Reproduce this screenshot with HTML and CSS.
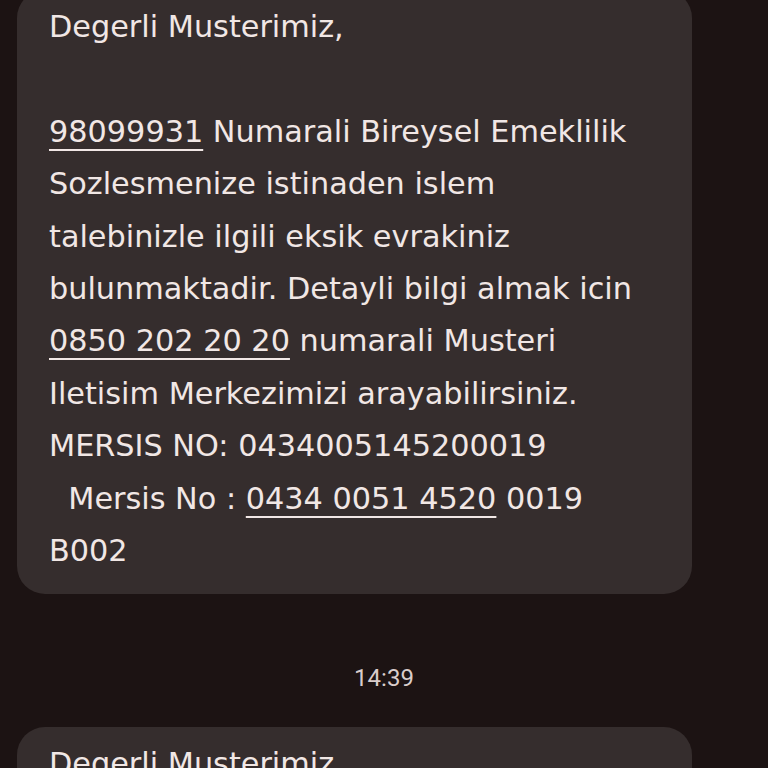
FILE: index.html
```html
<!DOCTYPE html>
<html>
<head>
<meta charset="utf-8">
<link rel="stylesheet" href="styles.css">
</head>
<body>
<div class="thread">
  <div class="bubble first">
    <p class="msg">Degerli Musterimiz,<br><br><span class="link">98099931</span> Numarali Bireysel Emeklilik<br>Sozlesmenize istinaden islem<br>talebinizle ilgili eksik evrakiniz<br>bulunmaktadir. Detayli bilgi almak icin<br><span class="link">0850 202 20 20</span> numarali Musteri<br>Iletisim Merkezimizi arayabilirsiniz.<br>MERSIS NO: 0434005145200019<br>&nbsp;&nbsp;Mersis No : <span class="link">0434 0051 4520</span> 0019<br>B002</p>
  </div>
  <div class="time">14:39</div>
  <div class="bubble second">
    <p class="msg">Degerli Musterimiz,</p>
  </div>
</div>
</body>
</html>
```

FILE: styles.css
```css
html, body {
  margin: 0;
  padding: 0;
  background: #1c1313;
  height: 100%;
  overflow: hidden;
}
.thread {
  padding-left: 17px;
  display: flex;
  flex-direction: column;
}
.bubble {
  width: 675px;
  box-sizing: border-box;
  background: #352d2d;
  border-radius: 28px;
  padding: 11px 32px 17px 32px;
}
.bubble.first {
  margin-top: -10px;
}
.msg {
  margin: 0;
  font-family: "DejaVu Sans", "Open Sans", sans-serif;
  font-size: 30.3px;
  line-height: 52.4px;
  color: #f1e7e5;
  white-space: nowrap;
}
.link {
  text-decoration: underline;
  text-decoration-thickness: 2px;
  text-underline-offset: 7px;
}
.time {
  font-family: Roboto, "Noto Sans", sans-serif;
  font-size: 24px;
  color: #d9cdcb;
  text-align: center;
  width: 734px;
  height: 133px;
  line-height: 26px;
  padding-top: 71px;
  box-sizing: border-box;
}
```
